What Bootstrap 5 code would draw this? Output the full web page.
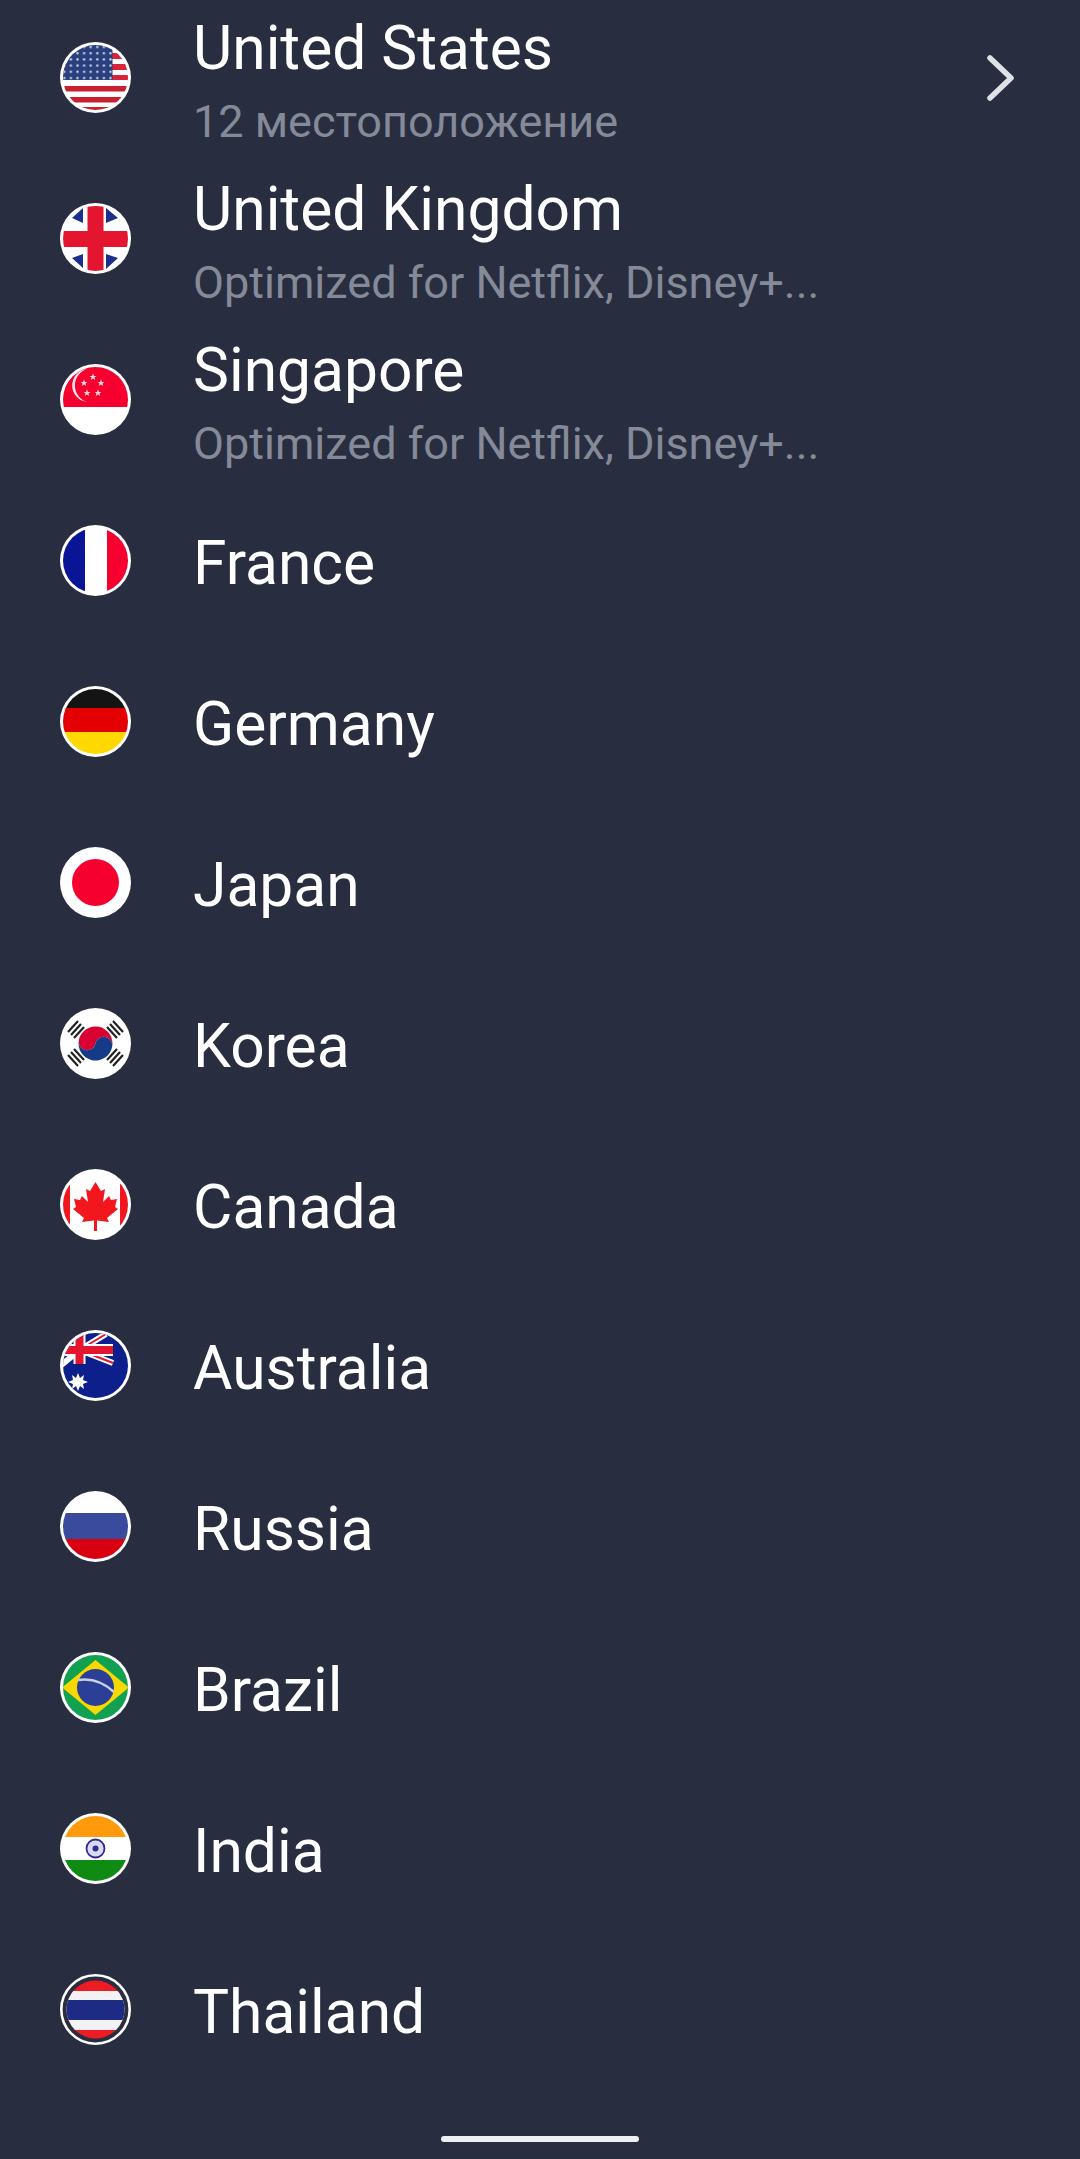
<!DOCTYPE html>
<html lang="en">
<head>
    <meta charset="UTF-8">
    <meta name="viewport" content="width=device-width, initial-scale=1.0">
    <link href="https://cdn.jsdelivr.net/npm/bootstrap@5.3.0/dist/css/bootstrap.min.css" rel="stylesheet">
    <script src="https://cdn.jsdelivr.net/npm/bootstrap@5.3.0/dist/js/bootstrap.bundle.min.js"></script>
    <title>Locations</title>
    <style>
        html, body { height: 100%; }
        body {
            background-color: #282e40;
            font-family: Roboto, "Liberation Sans", sans-serif;
            overflow: hidden;
        }
        .loc-list {
            margin-top: -3px;
            --bs-list-group-bg: transparent;
            --bs-list-group-border-width: 0;
            --bs-list-group-color: #fff;
        }
        .loc-row {
            height: 161px;
            padding: 0 63px 0 60px;
            gap: 62px;
        }
        .loc-flag { width: 71px; height: 71px; flex: none; display: block; }
        .loc-stack { padding-top: 14px; }
        .loc-title { font-size: 60.5px; line-height: 73px; color: #fff; }
        .loc-single { padding-top: 5px; }
        .loc-sub { font-size: 45px; line-height: 73px; color: #858a98; }
        .loc-arrow { width: 32px; height: 48px; flex: none; }
        .home-bar {
            position: absolute;
            left: 441px;
            top: 2136px;
            width: 198px;
            height: 6px;
            border-radius: 3px;
            background-color: #eef0f2;
        }
    </style>
</head>
<body>
    <svg width="0" height="0" class="position-absolute">
        <defs>
            <clipPath id="inner"><circle cx="35.5" cy="35.5" r="32.5"/></clipPath>
            <clipPath id="innerTh"><circle cx="35.5" cy="35.5" r="29"/></clipPath>
            <pattern id="stars" width="6.6" height="6.2" patternUnits="userSpaceOnUse" x="1" y="2">
                <circle cx="3.3" cy="3" r="1.2" fill="#c9d3e6"/>
            </pattern>
            <polygon id="star5" points="0,-3.6 1,-1.1 3.4,-1.1 1.5,.5 2.2,3 0,1.500 -2.200,3 -1.500,.5 -3.400,-1.100 -1,-1.100"/>
        </defs>
    </svg>

    <ul class="list-group list-group-flush loc-list">
        <li class="list-group-item d-flex align-items-center loc-row">
            <svg class="loc-flag" viewBox="0 0 71 71">
                <circle cx="35.5" cy="35.5" r="35.5" fill="#fff"/>
                <g clip-path="url(#inner)">
                    <rect x="0" y="11" width="71" height="6" fill="#d8243a"/>
                    <rect x="0" y="22" width="71" height="6" fill="#d8243a"/>
                    <rect x="0" y="33" width="71" height="5" fill="#d8243a"/>
                    <rect x="0" y="44" width="71" height="5.5" fill="#c8202f"/>
                    <rect x="0" y="55" width="71" height="5.5" fill="#c8202f"/>
                    <rect x="0" y="65" width="71" height="5.5" fill="#c8202f"/>
                    <rect x="0" y="0" width="52.5" height="38" fill="#2a3f7e"/>
                    <rect x="0" y="0" width="52.5" height="38" fill="url(#stars)"/>
                </g>
            </svg>
            <div class="flex-grow-1 loc-stack">
                <div class="loc-title">United States</div>
                <div class="loc-sub">12 местоположение</div>
            </div>
            <svg class="loc-arrow" viewBox="0 0 32 48" fill="none" stroke="#dfe1e5" stroke-width="5.500" stroke-linecap="round" stroke-linejoin="round">
                <path d="M5 4 L26 24 L5 44"/>
            </svg>
        </li>
        <li class="list-group-item d-flex align-items-center loc-row">
            <svg class="loc-flag" viewBox="0 0 71 71">
                <circle cx="35.5" cy="35.5" r="35.5" fill="#fff"/>
                <path d="M12 15 23 5V20ZM46 5 58 15 46 20ZM12 55 23 65V51ZM46 66 58 55 46 51Z" fill="#1c2f8c"/>
                <g clip-path="url(#inner)">
                    <rect x="27.500" y="0" width="16" height="71" fill="#e3152f"/>
                    <rect x="0" y="28" width="71" height="16" fill="#e3152f"/>
                </g>
            </svg>
            <div class="flex-grow-1 loc-stack">
                <div class="loc-title">United Kingdom</div>
                <div class="loc-sub">Optimized for Netflix, Disney+...</div>
            </div>
        </li>
        <li class="list-group-item d-flex align-items-center loc-row">
            <svg class="loc-flag" viewBox="0 0 71 71">
                <circle cx="35.5" cy="35.5" r="35.5" fill="#fff"/>
                <g clip-path="url(#inner)">
                    <rect x="0" y="0" width="71" height="43" fill="#f5002f"/>
                </g>
                <path d="M27 5A16.600 16.600 0 0 0 27 38A17.300 17.300 0 0 1 27 5Z" fill="#fbe6e9"/>
                <g fill="#f8d3d8">
                    <use href="#star5" x="33" y="13"/><use href="#star5" x="24" y="19"/><use href="#star5" x="41" y="19"/>
                    <use href="#star5" x="27" y="29"/><use href="#star5" x="38" y="29"/>
                </g>
            </svg>
            <div class="flex-grow-1 loc-stack">
                <div class="loc-title">Singapore</div>
                <div class="loc-sub">Optimized for Netflix, Disney+...</div>
            </div>
        </li>
        <li class="list-group-item d-flex align-items-center loc-row">
            <svg class="loc-flag" viewBox="0 0 71 71">
                <circle cx="35.5" cy="35.5" r="35.5" fill="#fff"/>
                <g clip-path="url(#inner)">
                    <rect x="0" y="0" width="25" height="71" fill="#0a1497"/>
                    <rect x="47" y="0" width="24" height="71" fill="#f5002f"/>
                </g>
            </svg>
            <div class="loc-title loc-single">France</div>
        </li>
        <li class="list-group-item d-flex align-items-center loc-row">
            <svg class="loc-flag" viewBox="0 0 71 71">
                <circle cx="35.5" cy="35.5" r="35.5" fill="#fff"/>
                <g clip-path="url(#inner)">
                    <rect x="0" y="0" width="71" height="23" fill="#141414"/>
                    <rect x="0" y="22" width="71" height="24" fill="#e40000"/>
                    <rect x="0" y="46" width="71" height="25" fill="#ffd800"/>
                </g>
            </svg>
            <div class="loc-title loc-single">Germany</div>
        </li>
        <li class="list-group-item d-flex align-items-center loc-row">
            <svg class="loc-flag" viewBox="0 0 71 71">
                <circle cx="35.5" cy="35.5" r="35.5" fill="#fff"/>
                <circle cx="35.5" cy="35.5" r="23.5" fill="#f5002f"/>
            </svg>
            <div class="loc-title loc-single">Japan</div>
        </li>
        <li class="list-group-item d-flex align-items-center loc-row">
            <svg class="loc-flag" viewBox="0 0 71 71">
                <circle cx="35.5" cy="35.5" r="35.5" fill="#fff"/>
                <g transform="rotate(12 35.5 35.5)">
                    <path d="M18.500 35.500a17 17 0 0 1 34 0 8.500 8.500 0 0 0-17 0 8.500 8.500 0 0 1-17 0Z" fill="#d90032"/>
                    <path d="M18.500 35.500a17 17 0 0 0 34 0 8.500 8.500 0 0 0-17 0 8.500 8.500 0 0 1-17 0Z" fill="#153a87"/>
                </g>
                <g stroke="#222" stroke-width="2.2">
                    <path d="M8 24 18 13M11 27 21 16M14 30 24 19"/>
                    <path d="M53 13 63 24M50 16 60 27M47 19 57 30"/>
                    <path d="M8 47 18 58M11 44 21 55M14 41 24 52"/>
                    <path d="M53 58 63 47M50 55 60 44M47 52 57 41"/>
                </g>
            </svg>
            <div class="loc-title loc-single">Korea</div>
        </li>
        <li class="list-group-item d-flex align-items-center loc-row">
            <svg class="loc-flag" viewBox="0 0 71 71">
                <circle cx="35.5" cy="35.5" r="35.5" fill="#fff"/>
                <g clip-path="url(#inner)">
                    <rect x="0" y="0" width="10" height="71" fill="#f2171d"/>
                    <rect x="60" y="0" width="11" height="71" fill="#f2171d"/>
                </g>
                <path d="M35.500 13 41 22 45 20 43 33 49 27 51 31 57 30 55 38 58 40 47 49 49 53 37 51.500 37 62 34 62 34 51.500 22 53 24 49 13 40 16 38 14 30 20 31 22 27 28 33 26 20 30 22Z" fill="#f2171d"/>
            </svg>
            <div class="loc-title loc-single">Canada</div>
        </li>
        <li class="list-group-item d-flex align-items-center loc-row">
            <svg class="loc-flag" viewBox="0 0 71 71">
                <circle cx="35.5" cy="35.5" r="35.5" fill="#fff"/>
                <g clip-path="url(#inner)">
                    <rect x="0" y="0" width="71" height="71" fill="#0c1f8a"/>
                    <path d="M19.500 20 53 33M19.500 20 46 4M19.500 20 0 36" stroke="#fff" stroke-width="6"/>
                    <path d="M19.500 20 53 33M19.500 20 46 4" stroke="#e3152f" stroke-width="2"/>
                    <path d="M19.500 0V34M0 20H53" stroke="#fff" stroke-width="12"/>
                    <path d="M19.500 0V34M0 20H53" stroke="#e3152f" stroke-width="8"/>
                </g>
                <polygon points="18,43 20,48 24,45 23,50 28,52 23,54 24,59 20,56 18,61 16,56 12,59 13,54 8,52 13,50 12,45 16,48" fill="#fff"/>
            </svg>
            <div class="loc-title loc-single">Australia</div>
        </li>
        <li class="list-group-item d-flex align-items-center loc-row">
            <svg class="loc-flag" viewBox="0 0 71 71">
                <circle cx="35.5" cy="35.5" r="35.5" fill="#fff"/>
                <g clip-path="url(#inner)">
                    <rect x="0" y="22" width="71" height="26" fill="#3a4a9c"/>
                    <rect x="0" y="48" width="71" height="23" fill="#d80010"/>
                </g>
            </svg>
            <div class="loc-title loc-single">Russia</div>
        </li>
        <li class="list-group-item d-flex align-items-center loc-row">
            <svg class="loc-flag" viewBox="0 0 71 71">
                <circle cx="35.5" cy="35.5" r="35.5" fill="#fff"/>
                <circle cx="35.5" cy="35.5" r="32.5" fill="#12a150"/>
                <g clip-path="url(#inner)"><path d="M35.500 8 69 35.500 35.500 63 2 35.500Z" fill="#f8d800"/></g>
                <circle cx="35.500" cy="35.500" r="18.500" fill="#2c3f96"/>
                <path d="M18 28q20-3 36 12" fill="none" stroke="#c6d2e2" stroke-width="2.500"/>
            </svg>
            <div class="loc-title loc-single">Brazil</div>
        </li>
        <li class="list-group-item d-flex align-items-center loc-row">
            <svg class="loc-flag" viewBox="0 0 71 71">
                <circle cx="35.5" cy="35.5" r="35.5" fill="#fff"/>
                <g clip-path="url(#inner)">
                    <rect x="0" y="0" width="71" height="24" fill="#ff9a0d"/>
                    <rect x="0" y="47" width="71" height="24" fill="#0f8a12"/>
                </g>
                <circle cx="35.5" cy="35.5" r="9" fill="#dcdaf0" stroke="#2f2b91" stroke-width="1.800"/>
                <circle cx="35.5" cy="35.5" r="3" fill="#2f2b91"/>
            </svg>
            <div class="loc-title loc-single">India</div>
        </li>
        <li class="list-group-item d-flex align-items-center loc-row">
            <svg class="loc-flag" viewBox="0 0 71 71">
                <circle cx="35.5" cy="35.5" r="34.200" fill="none" stroke="#fff" stroke-width="2.600"/>
                <g clip-path="url(#innerTh)">
                    <rect x="0" y="0" width="71" height="71" fill="#ed1c24"/>
                    <rect x="0" y="17" width="71" height="39" fill="#f2f2f5"/>
                    <rect x="0" y="26" width="71" height="20" fill="#1d2b84"/>
                </g>
            </svg>
            <div class="loc-title loc-single">Thailand</div>
        </li>
    </ul>
    <div class="home-bar"></div>
</body>
</html>
